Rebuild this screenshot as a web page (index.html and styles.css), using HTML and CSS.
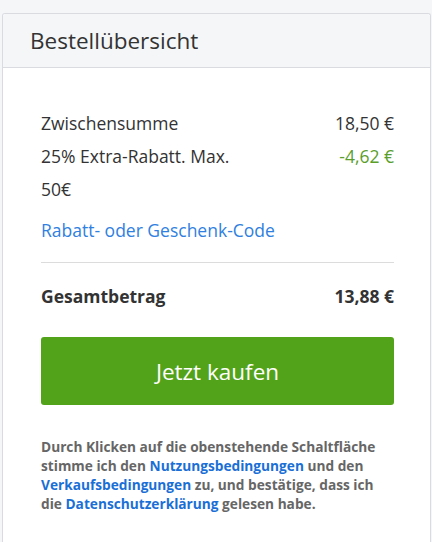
FILE: index.html
```html
<!DOCTYPE html>
<html lang="de">
<head>
<meta charset="utf-8">
<title>Bestellübersicht</title>
<link rel="stylesheet" href="styles.css">
</head>
<body>
<section class="card">
  <header class="card-header">Bestellübersicht</header>
  <div class="card-body">
    <div class="row">
      <span class="label">Zwischensumme</span>
      <span class="value">18,50 €</span>
    </div>
    <div class="row">
      <span class="label">25% Extra-Rabatt. Max. 50€</span>
      <span class="value discount">-4,62 €</span>
    </div>
    <a class="code-link" href="#">Rabatt- oder Geschenk-Code</a>
    <hr class="divider">
    <div class="row total">
      <span class="label">Gesamtbetrag</span>
      <span class="value">13,88 €</span>
    </div>
    <button class="buy" type="button">Jetzt kaufen</button>
    <p class="legal">Durch Klicken auf die obenstehende Schaltfläche stimme ich den <a href="#">Nutzungsbedingungen</a> und den <a href="#">Verkaufsbedingungen</a> zu, und bestätige, dass ich die <a href="#">Datenschutzerklärung</a> gelesen habe.</p>
  </div>
</section>
</body>
</html>
```

FILE: styles.css
```css
html, body {
  margin: 0;
  padding: 0;
  background: #f5f6f8;
  font-family: "Open Sans", "Liberation Sans", sans-serif;
  color: #333;
}

.card {
  margin: 13px 1px 0 2px;
  background: #fff;
  border: 1px solid #d9dbe0;
  border-bottom: none;
  border-radius: 3px 3px 0 0;
  min-height: 540px;
  box-sizing: border-box;
}

.card-header {
  background: #f5f6f8;
  border-bottom: 1px solid #d9dbe0;
  padding: 12px 27px 11px 27px;
  font-size: 22.5px;
  line-height: 30px;
  color: #333;
  border-radius: 3px 3px 0 0;
}

.card-body {
  padding: 39px 36px 0 38px;
  display: flex;
  flex-direction: column;
}

.row {
  display: flex;
  justify-content: space-between;
  align-items: flex-start;
  font-size: 17.5px;
  line-height: 33px;
}

.label {
  flex: 0 0 58%;
}

.value {
  text-align: right;
}

.discount {
  color: #5a9e2c;
}

.code-link {
  margin-top: 8px;
  font-size: 17.5px;
  line-height: 33px;
  color: #2f80e0;
  text-decoration: none;
}

.divider {
  margin: 15px 0 0 0;
  border: none;
  border-top: 1px solid #dcdcdc;
  height: 0;
}

.total {
  margin-top: 17px;
  font-weight: 700;
}

.buy {
  margin-top: 24px;
  height: 68px;
  border: none;
  border-radius: 3px;
  background: #53a31a;
  color: #fff;
  font-family: "Open Sans", "Liberation Sans", sans-serif;
  font-size: 22.5px;
  cursor: pointer;
}

.legal {
  margin: 32px 0 0 0;
  font-size: 13.7px;
  line-height: 19px;
  font-weight: 700;
  color: #666;
}

.legal a {
  color: #1a6fd6;
  text-decoration: none;
}
```
